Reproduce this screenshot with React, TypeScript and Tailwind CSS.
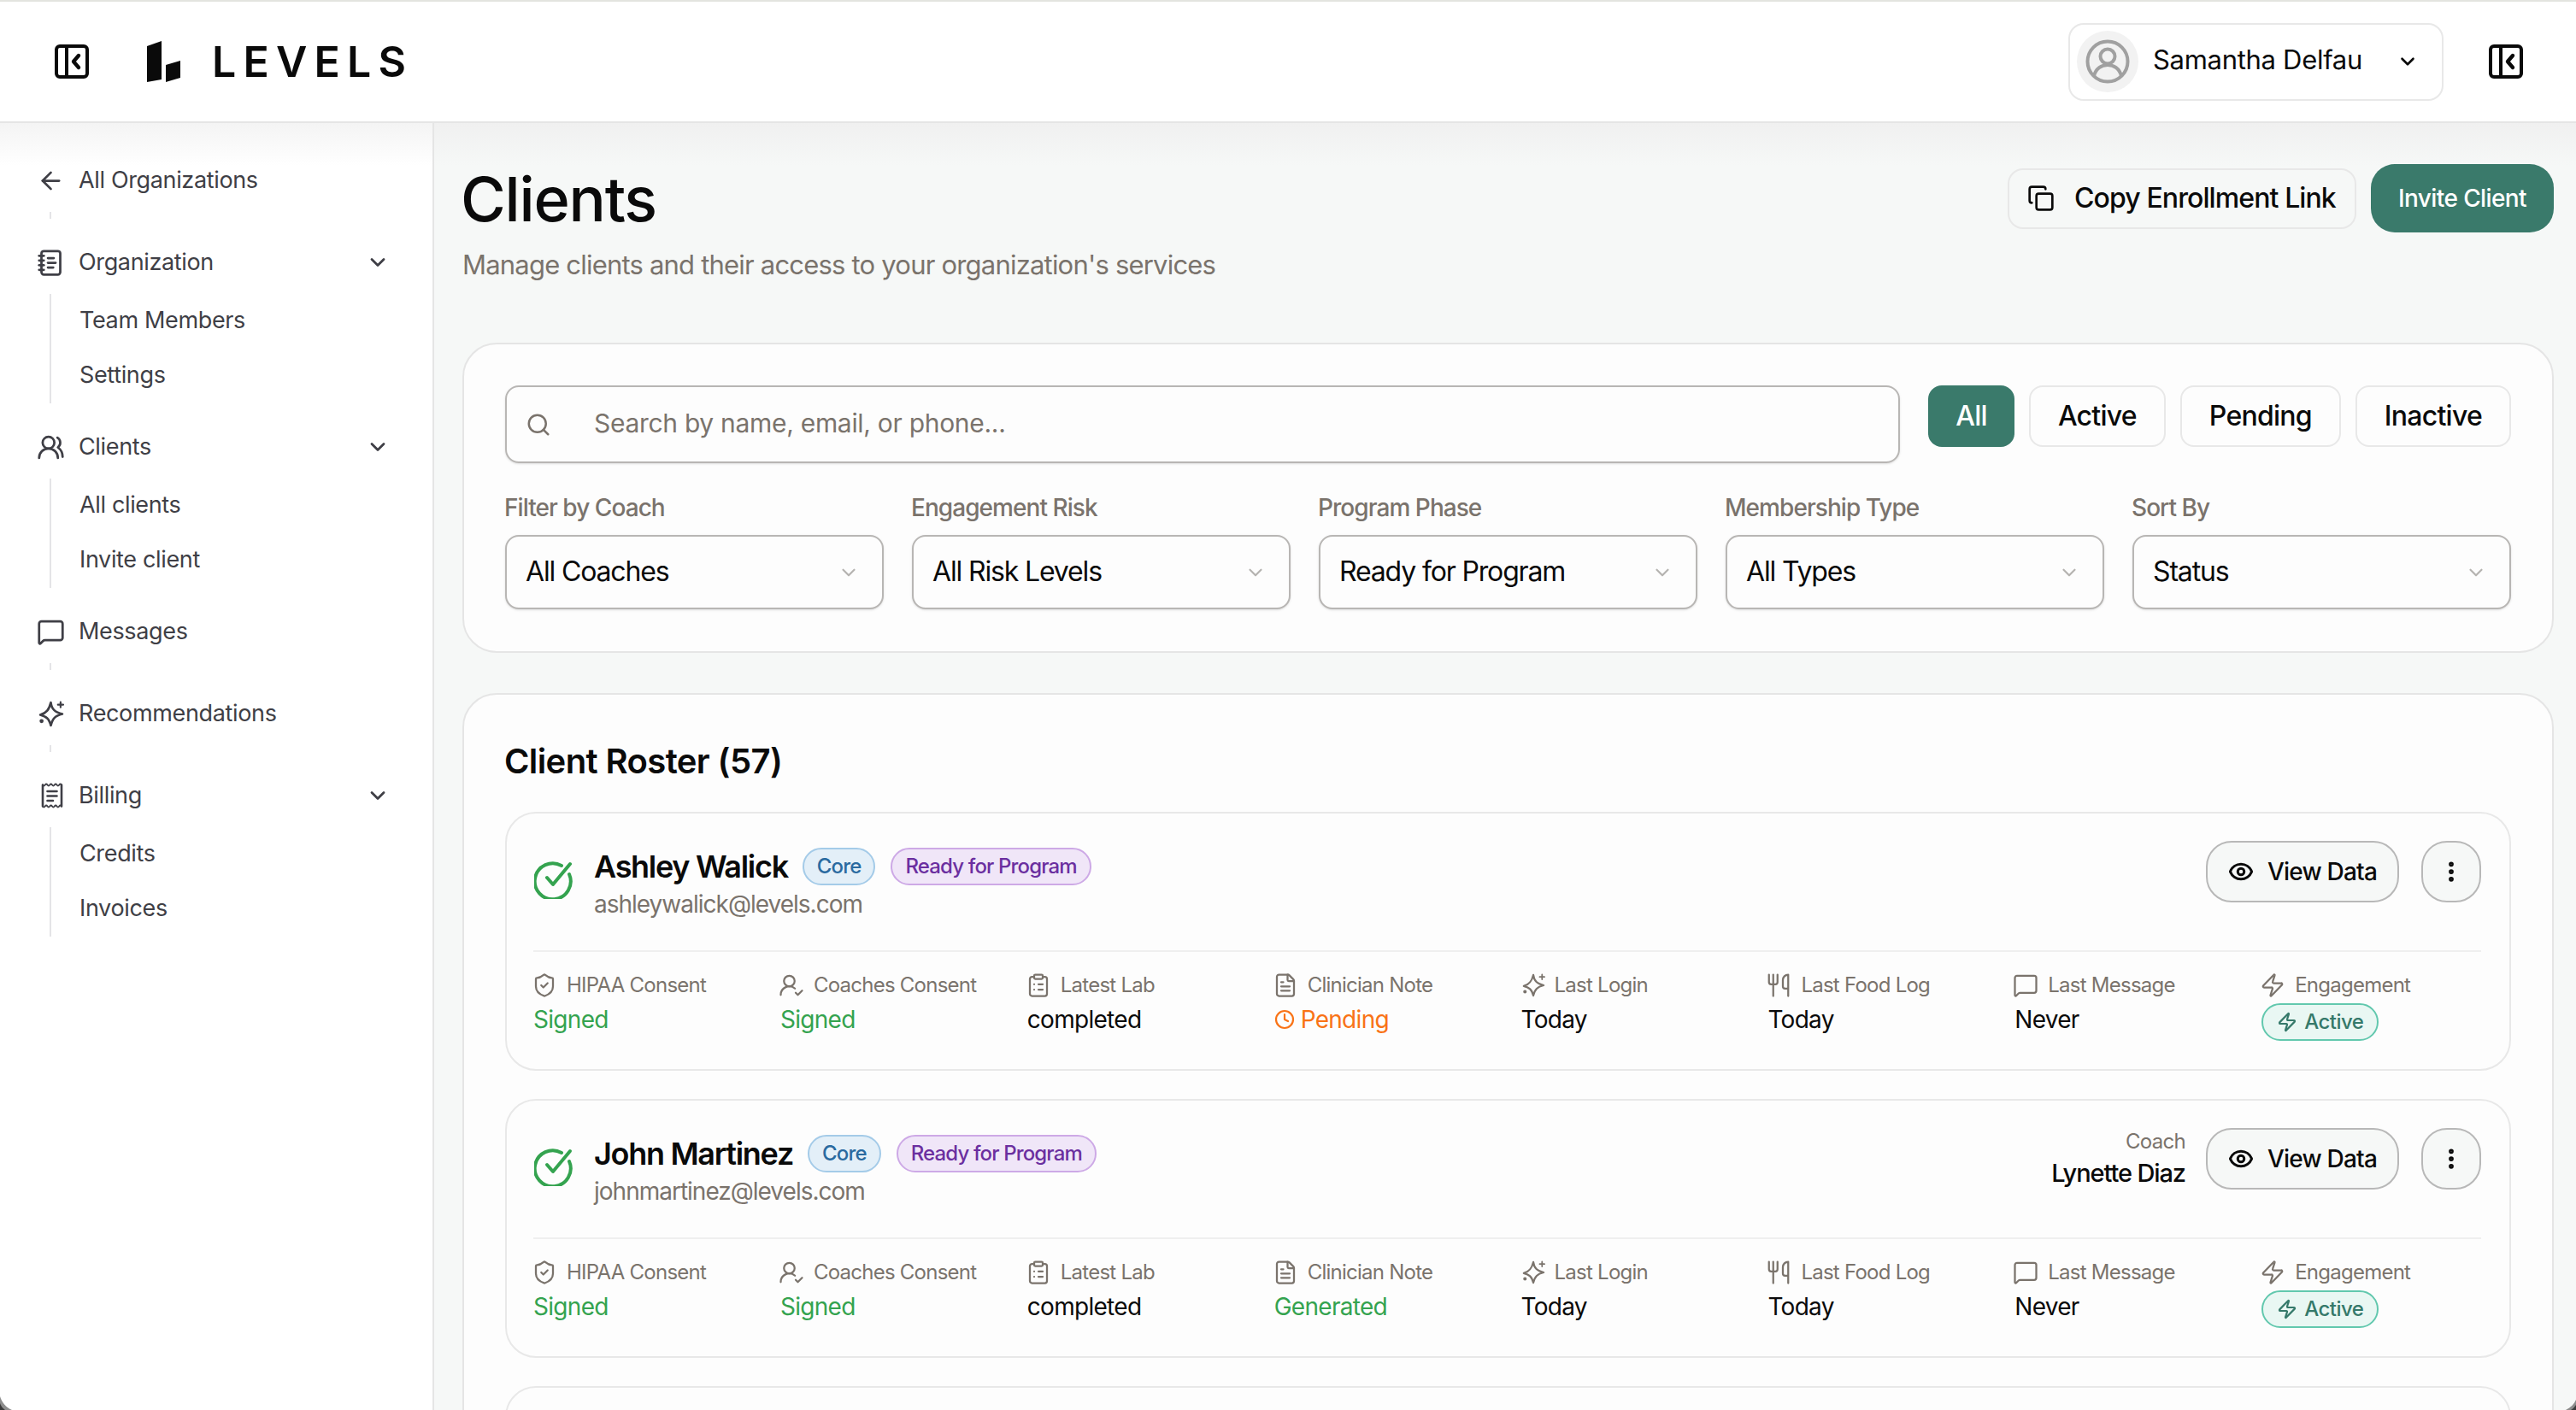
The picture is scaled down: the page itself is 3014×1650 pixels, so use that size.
import { ArrowLeft, ChevronDown, Copy, Search, Eye, EllipsisVertical, MessageSquare, Zap, Utensils, Clock, ShieldCheck, UserRoundCheck, ClipboardList, FileText, UsersRound, NotebookText } from 'lucide-react';
import type { ReactNode } from 'react';

const font = "font-['Inter','Liberation_Sans',sans-serif]";

function PanelIcon({ className }: { className?: string }) {
  return (
    <svg viewBox="0 0 40 40" className={className} fill="none" stroke="#0a0a0a" strokeWidth="4">
      <rect x="2" y="2" width="36" height="36" rx="4" />
      <path d="M14 2v36" />
      <path d="M28 13l-6 7 6 7" strokeWidth="4.4" strokeLinecap="round" strokeLinejoin="round" />
    </svg>
  );
}

function Logo() {
  return (
    <svg viewBox="0 0 40 48" className="w-[40px] h-[48px]" fill="#0a0a0a">
      <path d="M0 6L17 0V45L0 48Z" />
      <path d="M22 28L39 23V43L22 48Z" />
    </svg>
  );
}

function Avatar() {
  return (
    <div className="w-[72px] h-[72px] rounded-full bg-[#f2f2f2] flex items-center justify-center shrink-0">
      <svg viewBox="0 0 52 52" className="w-[52px] h-[52px]" fill="none" stroke="#a0a0a0" strokeWidth="4">
        <circle cx="26" cy="26" r="23.5" />
        <circle cx="26" cy="20" r="8.5" />
        <path d="M10 43c2-9 9-13 16-13s14 4 16 13" />
      </svg>
    </div>
  );
}

function CheckCircleIcon() {
  return (
    <svg viewBox="0 0 46 46" className="w-[46px] h-[46px] shrink-0" fill="none" stroke="#34a34f" strokeWidth="4" strokeLinecap="round" strokeLinejoin="round">
      <path d="M41 17a21 21 0 1 1-9-10" />
      <path d="M15 21l7 8 20-24" />
    </svg>
  );
}

function SparkleIcon({ className, strokeWidth = 2.6 }: { className?: string; strokeWidth?: number }) {
  return (
    <svg viewBox="0 0 29 30" className={className} fill="none" stroke="currentColor" strokeWidth={strokeWidth} strokeLinecap="round" strokeLinejoin="round">
      <path d="M14 2C15 10 19 13 27 15C19 17 16 20 14 28C12 20 9 18 2 16C9 14 12 10 14 2Z" />
      <path d="M25 1.5v6M22 4.5h6" strokeWidth={strokeWidth * 0.8} />
      <circle cx="3.5" cy="23" r="1" fill="currentColor" />
    </svg>
  );
}

function ReceiptIcon({ className }: { className?: string }) {
  return (
    <svg viewBox="0 0 26 30" className={className} fill="none" stroke="currentColor" strokeWidth="2.6" strokeLinecap="round" strokeLinejoin="round">
      <path d="M2 2.5V27.5M24 2.5V27.5" />
      <path d="M2 2.5q1.4 2 2.75 0t2.75 0t2.75 0t2.75 0t2.75 0t2.75 0t2.75 0t2.75 0" strokeWidth="1.8" />
      <path d="M2 27.5q1.4 2 2.75 0t2.75 0t2.75 0t2.75 0t2.75 0t2.75 0t2.75 0t2.75 0" strokeWidth="1.8" />
      <path d="M7.5 10H18.5M7.5 15.5H18.5M7.5 21H14" />
    </svg>
  );
}

function WindowCorner({ side }: { side: 'left' | 'right' }) {
  return side === 'left' ? (
    <svg viewBox="0 0 14 16" className="absolute left-0 bottom-0 w-[14px] h-[16px]">
      <path d="M0 0C2 7 7 13 14 16H0Z" fill="#8d8d8d" />
      <path d="M0 8C1 11 3 14 6 16H0Z" fill="#3a3a3a" />
    </svg>
  ) : (
    <svg viewBox="0 0 12 12" className="absolute right-0 bottom-0 w-[12px] h-[12px]">
      <path d="M12 0C10 5 6 9 0 12H12Z" fill="#8d8d8d" />
      <path d="M12 6C10 9 8 11 6 12H12Z" fill="#3a3a3a" />
    </svg>
  );
}

function SideItem({ icon, label, chevron }: { icon: ReactNode; label: string; chevron?: boolean }) {
  return (
    <div className="flex items-center h-[40px] text-[#3f3f46] text-[27px] tracking-[-0.35px]">
      <div className="w-[49px] ml-[43px] flex shrink-0">{icon}</div>
      <span className="flex-1">{label}</span>
      {chevron && <ChevronDown className="w-[28px] h-[28px] mr-[50px]" strokeWidth={2.4} />}
    </div>
  );
}

function SubItems({ items }: { items: string[] }) {
  return (
    <div className="ml-[58px] mt-[17px] border-l-2 border-[#e4e4e7] flex flex-col gap-[24px] pt-[11px] pb-[13px] pl-[33px]">
      {items.map((item) => (
        <div key={item} className="text-[27px] leading-[40px] text-[#3f3f46] tracking-[-0.35px]">
          {item}
        </div>
      ))}
    </div>
  );
}

function Tick() {
  return <div className="ml-[58px] w-[2px] h-[8px] mt-[17px] bg-[#e4e4e7]" />;
}

function Sidebar() {
  const iconClass = 'w-[33px] h-[33px]';
  return (
    <aside className="w-[508px] shrink-0 bg-white border-r-2 border-[#e5e5e5] relative">
      <div className="absolute inset-x-0 top-0 h-[50px] bg-gradient-to-b from-[#f4f4f4] to-white" />
      <div className="relative pt-[47px]">
        <SideItem icon={<ArrowLeft className={iconClass} strokeWidth={2} />} label="All Organizations" />
        <Tick />
        <div className="mt-[31px]">
          <SideItem icon={<NotebookText className={iconClass} strokeWidth={2} />} label="Organization" chevron />
        </div>
        <SubItems items={['Team Members', 'Settings']} />
        <div className="mt-[31px]">
          <SideItem icon={<UsersRound className={iconClass} strokeWidth={2} />} label="Clients" chevron />
        </div>
        <SubItems items={['All clients', 'Invite client']} />
        <div className="mt-[31px]">
          <SideItem icon={<MessageSquare className={iconClass} strokeWidth={2} />} label="Messages" />
        </div>
        <Tick />
        <div className="mt-[31px]">
          <SideItem icon={<SparkleIcon className="w-[30px] h-[31px] ml-[2px]" />} label="Recommendations" />
        </div>
        <Tick />
        <div className="mt-[31px]">
          <SideItem icon={<ReceiptIcon className="w-[26px] h-[30px] ml-[5px]" />} label="Billing" chevron />
        </div>
        <SubItems items={['Credits', 'Invoices']} />
      </div>
    </aside>
  );
}

function FilterSelect({ label, value }: { label: string; value: string }) {
  return (
    <div>
      <div className="text-[28px] leading-[36px] font-medium text-[#7a736c] tracking-[-0.95px] -ml-[1px]">{label}</div>
      <div className="mt-[14px] h-[87px] rounded-[16px] border-2 border-[#b8b6b4] bg-[#fdfdfd] shadow-sm flex items-center justify-between pl-[22px] pr-[26px]">
        <span className="text-[32px] text-[#0a0a0a] tracking-[-1.15px] pb-[2px]">{value}</span>
        <ChevronDown className="w-[26px] h-[26px] text-[#b5b3b0]" strokeWidth={2} />
      </div>
    </div>
  );
}

function StatusPill({ label, active }: { label: string; active?: boolean }) {
  return active ? (
    <div className="h-[72px] px-[32px] rounded-[16px] bg-[#3a7a6b] text-white text-[32px] font-medium flex items-center tracking-[-0.75px]">{label}</div>
  ) : (
    <div className="h-[72px] px-[32px] rounded-[16px] border-2 border-[#e8e8e8] text-[#0a0a0a] text-[32px] font-medium flex items-center tracking-[-0.75px]">{label}</div>
  );
}

function Stat({ icon, label, children }: { icon: ReactNode; label: string; children: ReactNode }) {
  return (
    <div>
      <div className="flex items-center gap-[11px] text-[#7a736c] h-[26px] -ml-[2px]">
        {icon}
        <span className="text-[24px] tracking-[-0.75px]">{label}</span>
      </div>
      <div className="mt-[5px] h-[44px] text-[28px] flex items-center tracking-[-0.7px]">{children}</div>
    </div>
  );
}

const statIcon = 'w-[30px] h-[30px] shrink-0';

function ClientCard({ name, email, coach, notePending }: { name: string; email: string; coach?: string; notePending?: boolean }) {
  return (
    <div className="h-[303px] rounded-[36px] border-2 border-[#e8e8e8] bg-[#fdfdfd] pl-[31px] pr-[33px] shrink-0">
      <div className="h-[162px] border-b-2 border-[#efefef] flex pt-[32px]">
        <div className="mt-[22px] ml-[1px]">
          <CheckCircleIcon />
        </div>
        <div className="ml-[24px] flex-1">
          <div className="flex items-center h-[44px] mt-[8px]">
            <span className="text-[36px] font-semibold text-[#0a0a0a] tracking-[-1.3px]">{name}</span>
            <span className="ml-[17px] h-[44px] px-[15px] rounded-full border-2 border-[#a4cbe8] bg-[#e3eff8] text-[#2a6aa0] text-[24px] font-medium flex items-center tracking-[-0.85px]">Core</span>
            <span className="ml-[18px] h-[44px] px-[15px] rounded-full border-2 border-[#cda9e6] bg-[#f0e6f8] text-[#6b2fa0] text-[24px] font-medium flex items-center tracking-[-0.85px]">Ready for Program</span>
          </div>
          <div className="mt-[1px] text-[28px] text-[#7a736c] tracking-[-1px]">{email}</div>
        </div>
        {coach && (
          <div className="text-right mr-[24px] -mt-[2px]">
            <div className="text-[24px] leading-[36px] text-[#7a736c] tracking-[-0.7px]">Coach</div>
            <div className="text-[29px] leading-[38px] font-medium text-[#0a0a0a] tracking-[-1.1px]">{coach}</div>
          </div>
        )}
        <div className="flex gap-[26px]">
          <div className="h-[72px] w-[226px] rounded-[30px] border-2 border-[#b8b8b8] bg-[#f6f8f7] flex items-center justify-center gap-[16px] text-[28px] font-medium text-[#0a0a0a]">
            <Eye className="w-[30px] h-[30px]" strokeWidth={2.4} />
            <span className="tracking-[-0.8px]">View Data</span>
          </div>
          <div className="h-[72px] w-[70px] rounded-[30px] border-2 border-[#b8b8b8] bg-[#f6f8f7] flex items-center justify-center">
            <EllipsisVertical className="w-[30px] h-[30px] text-[#0a0a0a]" strokeWidth={2.6} />
          </div>
        </div>
      </div>
      <div className="grid grid-cols-8 gap-[32px] pt-[26px]">
        <Stat icon={<ShieldCheck className={statIcon} strokeWidth={1.8} />} label="HIPAA Consent">
          <span className="text-[#34a34f]">Signed</span>
        </Stat>
        <Stat icon={<UserRoundCheck className={statIcon} strokeWidth={1.8} />} label="Coaches Consent">
          <span className="text-[#34a34f]">Signed</span>
        </Stat>
        <Stat icon={<ClipboardList className={statIcon} strokeWidth={1.8} />} label="Latest Lab">
          <span className="text-[#0a0a0a]">completed</span>
        </Stat>
        <Stat icon={<FileText className={statIcon} strokeWidth={1.8} />} label="Clinician Note">
          {notePending ? (
            <span className="text-[#f97316] flex items-center gap-[7px]">
              <Clock className="w-[24px] h-[24px]" strokeWidth={2.2} />
              Pending
            </span>
          ) : (
            <span className="text-[#34a34f]">Generated</span>
          )}
        </Stat>
        <Stat icon={<SparkleIcon className="w-[27px] h-[28px] ml-[3px] shrink-0" strokeWidth={2.4} />} label="Last Login">
          <span className="text-[#0a0a0a]">Today</span>
        </Stat>
        <Stat icon={<Utensils className={statIcon} strokeWidth={1.8} />} label="Last Food Log">
          <span className="text-[#0a0a0a]">Today</span>
        </Stat>
        <Stat icon={<MessageSquare className={statIcon} strokeWidth={1.8} />} label="Last Message">
          <span className="text-[#0a0a0a]">Never</span>
        </Stat>
        <Stat icon={<Zap className={statIcon} strokeWidth={1.8} />} label="Engagement">
          <span className="mt-[6px] h-[44px] px-[16px] rounded-full border-2 border-[#62c8ae] bg-[#e9f7f3] text-[#35796a] text-[24px] font-medium flex items-center gap-[8px] tracking-[-0.5px]">
            <Zap className="w-[24px] h-[24px]" strokeWidth={2.2} />
            Active
          </span>
        </Stat>
      </div>
    </div>
  );
}

export default function App() {
  return (
    <div className={`${font} relative w-[3014px] h-[1650px] overflow-hidden bg-[#f6f8f7] flex flex-col`}>
      <header className="h-[144px] shrink-0 bg-white border-t-2 border-t-[#e3e4df] border-b-2 border-b-[#e5e5e5] flex items-center pl-[64px] pr-[62px]">
        <PanelIcon className="w-[40px] h-[40px]" />
        <div className="ml-[68px]">
          <Logo />
        </div>
        <span className="ml-[36px] text-[50px] font-semibold tracking-[8.2px] text-[#0a0a0a]">LEVELS</span>
        <div className="ml-auto w-[439px] h-[91px] rounded-[18px] border-2 border-[#e8e8e8] flex items-center pl-[8px]">
          <Avatar />
          <span className="ml-[17px] text-[31px] text-[#0a0a0a] tracking-[-0.3px] w-[285px] pb-[3px]">Samantha Delfau</span>
          <ChevronDown className="w-[26px] h-[26px] text-[#0a0a0a]" strokeWidth={2.4} />
        </div>
        <PanelIcon className="ml-[53px] w-[40px] h-[40px]" />
      </header>
      <div className="flex flex-1 min-h-0">
        <Sidebar />
        <main className="flex-1 min-w-0 relative">
          <div className="absolute inset-x-0 top-0 h-[50px] bg-gradient-to-b from-[#f0f0f0] to-[#f6f8f7]" />
          <div className="relative pl-[33px] pr-[26px]">
            <div className="flex justify-between items-start h-[257px]">
              <div className="pt-[44px]">
                <h1 className="text-[72px] leading-[90px] font-medium text-[#0a0a0a] tracking-[-1.2px] -ml-[2px]">Clients</h1>
                <p className="mt-[10px] text-[31px] leading-[44px] text-[#7a736c] tracking-[-0.8px]">Manage clients and their access to your organization's services</p>
              </div>
              <div className="flex items-center gap-[17px] pt-[48px]">
                <div className="h-[71px] w-[408px] rounded-[18px] border-2 border-[#e8e8e8] flex items-center pl-[21px] gap-[23px] text-[32px] font-medium text-[#0a0a0a]">
                  <Copy className="w-[32px] h-[32px]" strokeWidth={2} />
                  <span className="tracking-[-0.9px]">Copy Enrollment Link</span>
                </div>
                <div className="h-[80px] w-[214px] rounded-[28px] bg-[#3a7a6b] text-white text-[28px] font-medium flex items-center justify-center tracking-[-0.6px]">Invite Client</div>
              </div>
            </div>
            <section className="h-[363px] rounded-[40px] border-2 border-[#e5e5e5] bg-[#fdfdfd] px-[48px] pt-[48px]">
              <div className="flex items-start">
                <div className="flex-1 h-[91px] rounded-[16px] border-2 border-[#b8b6b4] shadow-sm flex items-center pl-[22px] text-[#7a736c]">
                  <Search className="w-[30px] h-[30px]" strokeWidth={2} />
                  <span className="ml-[50px] text-[30px] tracking-[-0.3px] pb-[2px]">Search by name, email, or phone...</span>
                </div>
                <div className="ml-[33px] flex gap-[17px]">
                  <StatusPill label="All" active />
                  <StatusPill label="Active" />
                  <StatusPill label="Pending" />
                  <StatusPill label="Inactive" />
                </div>
              </div>
              <div className="grid grid-cols-5 gap-[33px] mt-[34px]">
                <FilterSelect label="Filter by Coach" value="All Coaches" />
                <FilterSelect label="Engagement Risk" value="All Risk Levels" />
                <FilterSelect label="Program Phase" value="Ready for Program" />
                <FilterSelect label="Membership Type" value="All Types" />
                <FilterSelect label="Sort By" value="Status" />
              </div>
            </section>
            <section className="mt-[47px] h-[900px] rounded-[40px] border-2 border-[#e5e5e5] bg-[#fdfdfd] px-[48px] flex flex-col">
              <h2 className="mt-[52px] -ml-[1px] text-[40px] leading-[52px] font-semibold text-[#0a0a0a] tracking-[-0.6px]">Client Roster (57)</h2>
              <div className="mt-[33px] flex flex-col gap-[33px]">
                <ClientCard name="Ashley Walick" email="ashleywalick@levels.com" notePending />
                <ClientCard name="John Martinez" email="johnmartinez@levels.com" coach="Lynette Diaz" />
                <div className="h-[100px] rounded-[36px] border-2 border-[#e8e8e8] bg-[#fdfdfd] shrink-0" />
              </div>
            </section>
          </div>
        </main>
      </div>
      <WindowCorner side="left" />
      <WindowCorner side="right" />
    </div>
  );
}
